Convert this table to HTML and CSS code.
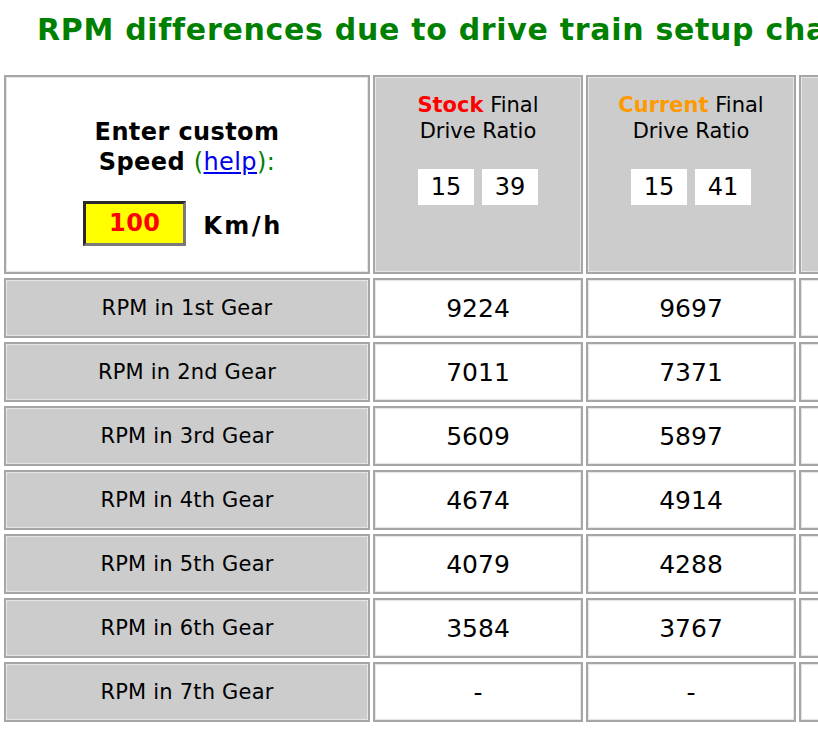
FILE: index.html
```html
<!DOCTYPE html>
<html>
<head>
<meta charset="utf-8">
<title>RPM differences</title>
<link rel="stylesheet" href="styles.css">
</head>
<body>
<h1 class="title">RPM differences due to drive train setup changes</h1>
<table class="rpm">
  <tr class="head">
    <td class="speed">
      <div class="speed-label">Enter custom<br>Speed <span class="green">(<a href="#" class="help">help</a>):</span></div>
      <div class="speed-row">
        <span class="speed-input">100</span>
        <span class="unit">Km/h</span>
      </div>
    </td>
    <th class="ratio">
      <div class="ratio-label"><b class="stock">Stock</b> Final<br>Drive Ratio</div>
      <div class="boxes"><span class="box">15</span><span class="box">39</span></div>
    </th>
    <th class="ratio">
      <div class="ratio-label"><b class="current">Current</b> Final<br>Drive Ratio</div>
      <div class="boxes"><span class="box">15</span><span class="box">41</span></div>
    </th>
    <th class="ratio"></th>
  </tr>
  <tr><th class="gear">RPM in 1st Gear</th><td class="val">9224</td><td class="val">9697</td><td class="val"></td></tr>
  <tr><th class="gear">RPM in 2nd Gear</th><td class="val">7011</td><td class="val">7371</td><td class="val"></td></tr>
  <tr><th class="gear">RPM in 3rd Gear</th><td class="val">5609</td><td class="val">5897</td><td class="val"></td></tr>
  <tr><th class="gear">RPM in 4th Gear</th><td class="val">4674</td><td class="val">4914</td><td class="val"></td></tr>
  <tr><th class="gear">RPM in 5th Gear</th><td class="val">4079</td><td class="val">4288</td><td class="val"></td></tr>
  <tr><th class="gear">RPM in 6th Gear</th><td class="val">3584</td><td class="val">3767</td><td class="val"></td></tr>
  <tr><th class="gear">RPM in 7th Gear</th><td class="val">-</td><td class="val">-</td><td class="val"></td></tr>
</table>
</body>
</html>
```

FILE: styles.css
```css
html, body {
  margin: 0;
  padding: 0;
  overflow: hidden;
  background: #ffffff;
}

body {
  font-family: "DejaVu Sans", Verdana, sans-serif;
  color: #000000;
  width: 1300px;
}

.title {
  margin: 0;
  padding: 12px 0 0 37px;
  font-size: 30px;
  line-height: 36px;
  font-weight: bold;
  letter-spacing: 0.7px;
  color: #008000;
  white-space: nowrap;
}

.rpm {
  margin: 23px 0 0 1px;
  border-collapse: separate;
  border-spacing: 3px 4px;
  border: 0;
}

.rpm td, .rpm th {
  box-sizing: border-box;
  border: 2px solid #a6a6a6;
  box-shadow: inset 0 0 0 1px #e6e6e6;
  padding: 0;
  text-align: center;
  font-weight: normal;
}

.head td, .head th {
  height: 199px;
  vertical-align: top;
}

.speed {
  width: 366px;
  background: #ffffff;
  padding-top: 40px !important;
}

.speed-label {
  font-size: 24px;
  line-height: 30px;
  font-weight: bold;
  letter-spacing: 0.4px;
}

.green {
  color: #008000;
  font-weight: normal;
}

.help {
  color: #0000ee;
  font-weight: normal;
  text-decoration: underline;
}

.speed-row {
  margin-top: 24px;
  display: flex;
  justify-content: center;
  align-items: center;
  gap: 17px;
  padding-right: 8px;
}

.speed-input {
  box-sizing: border-box;
  width: 103px;
  height: 45px;
  background: #ffff00;
  border: 3px solid;
  border-color: #2a2a2a #7a7a7a #7a7a7a #2a2a2a;
  color: #ff0000;
  font-size: 24px;
  font-weight: bold;
  letter-spacing: 0.5px;
  line-height: 39px;
  text-align: center;
}

.unit {
  font-size: 24px;
  font-weight: bold;
  letter-spacing: 2.5px;
  padding-top: 4px;
}

.ratio {
  width: 210px;
  background: #cccccc;
  padding-top: 15px !important;
}

.ratio-label {
  font-size: 21px;
  line-height: 26px;
}

.stock {
  color: #ff0000;
}

.current {
  color: #ff9900;
}

.boxes {
  margin-top: 25px;
  display: flex;
  justify-content: center;
  gap: 8px;
}

.box {
  width: 56px;
  height: 36px;
  background: #ffffff;
  font-size: 24px;
  line-height: 36px;
  text-align: center;
}

.gear {
  height: 60px;
  background: #cccccc;
  font-size: 21px;
  letter-spacing: 0.2px;
  vertical-align: middle;
}

.val {
  height: 60px;
  background: #ffffff;
  font-size: 25px;
  vertical-align: middle;
}
```
